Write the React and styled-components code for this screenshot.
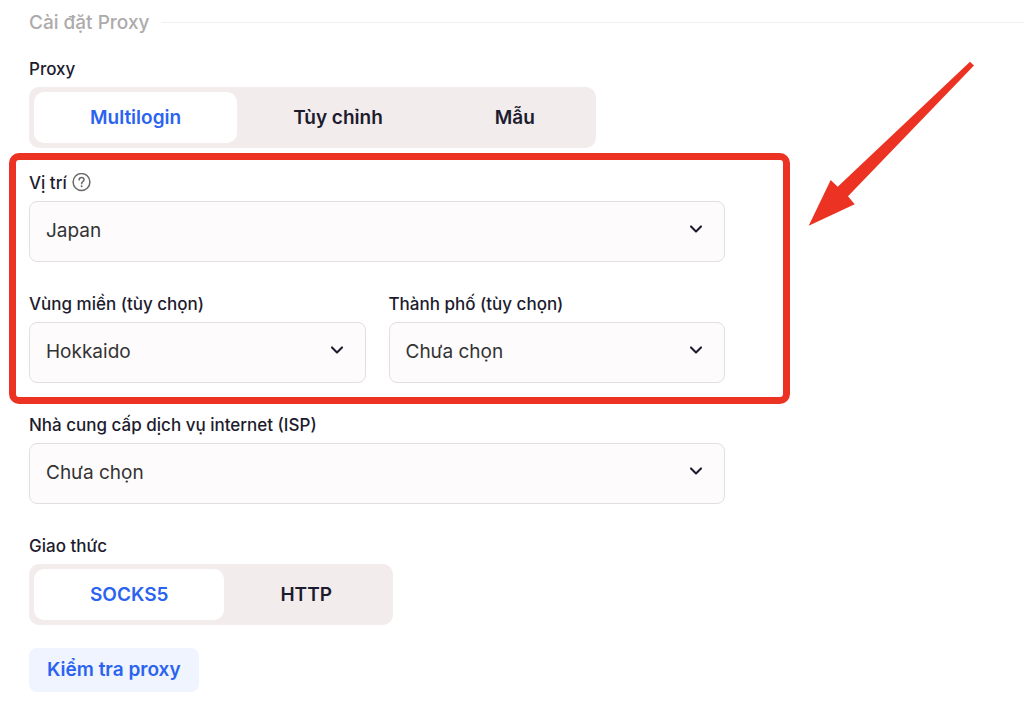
import React, { useState } from "react";
import styled, { createGlobalStyle } from "styled-components";

const App = () => {
  const [source, setSource] = useState("Multilogin");
  const [protocol, setProtocol] = useState("SOCKS5");

  return (
    <Page>
      <GlobalStyle />
      <Heading>Cài đặt Proxy</Heading>
      <Form onSubmit={(e) => e.preventDefault()}>
        <Tabs label="Proxy" name="source" items={["Multilogin", "Tùy chỉnh", "Mẫu"]} value={source} onChange={setSource} />

        <Highlight>
          <SelectField id="country" label="Vị trí" options={["Japan"]} help />
          <Columns>
            <SelectField id="region" label="Vùng miền (tùy chọn)" options={["Hokkaido"]} />
            <SelectField id="city" label="Thành phố (tùy chọn)" options={["Chưa chọn"]} />
          </Columns>
          <Frame />
          <Arrow viewBox="0 0 170 168" aria-hidden="true">
            <path d="M.7 165.7 22.7 120l7 6.7L162 1.7l4 3.8L40 136.3l6.7 8z" />
          </Arrow>
        </Highlight>

        <Protocol>
          <SelectField id="isp" label="Nhà cung cấp dịch vụ internet (ISP)" options={["Chưa chọn"]} />
          <Tabs label="Giao thức" name="protocol" items={["SOCKS5", "HTTP"]} value={protocol} onChange={setProtocol} />
        </Protocol>

        <CheckButton type="button">Kiểm tra proxy</CheckButton>
      </Form>
    </Page>
  );
};

export default App;

const Tabs = ({ label, name, items, value, onChange }) => (
  <Field>
    <Label as="span" id={name}>{label}</Label>
    <TabList role="group" aria-labelledby={name}>
      {items.map((item) => (
        <Tab key={item} type="button" $active={item === value} aria-pressed={item === value} onClick={() => onChange(item)}>
          {item}
        </Tab>
      ))}
    </TabList>
  </Field>
);

const SelectField = ({ id, label, options, help }) => (
  <Field>
    <LabelRow>
      <Label htmlFor={id}>{label}</Label>
      {help && (
        <HelpIcon viewBox="0 0 20 20" aria-hidden="true">
          <circle cx="9.5" cy="9" r="8.4" />
          <path d="M7.1 7c0-1.5 1-2.5 2.5-2.5S12 5.400 12 6.700c0 1.900-2.400 1.900-2.400 4" />
          <circle className="dot" cx="9.6" cy="13.2" r="1" />
        </HelpIcon>
      )}
    </LabelRow>
    <SelectBox>
      <Select id={id}>
        {options.map((option) => (
          <option key={option}>{option}</option>
        ))}
      </Select>
      <Chevron viewBox="0 0 14 10" aria-hidden="true">
        <path d="M2 2.400 7 7.400l5-5" />
      </Chevron>
    </SelectBox>
  </Field>
);

const GlobalStyle = createGlobalStyle`
  * {
    box-sizing: border-box;
  }
  body {
    margin: 0;
    background: #ffffff;
    color: #1d1b2e;
    font-family: Inter, "Noto Sans", sans-serif;
  }
  button,
  select {
    font-family: inherit;
    color: inherit;
  }
`;

const Page = styled.main`
  padding: 8px 0 12px 29px;
  overflow-x: hidden;
`;

const Heading = styled.h2`
  display: flex;
  align-items: center;
  gap: 12px;
  margin: 0 0 20px;
  font-weight: 500;
  font-size: 19px;
  line-height: 29px;
  color: #adabab;

  &::after {
    content: "";
    flex: 1;
    height: 1px;
    background: #f1f0f0;
  }
`;

const Form = styled.form`
  display: flex;
  flex-direction: column;
  align-items: stretch;
  gap: 23px;
  max-width: 696px;
`;

const Field = styled.div`
  display: flex;
  flex-direction: column;
  gap: 6px;
`;

const LabelRow = styled.div`
  display: flex;
  align-items: center;
  gap: 5px;
`;

const Label = styled.label`
  font-weight: 500;
  font-size: 17px;
  line-height: 24px;
`;

const HelpIcon = styled.svg`
  width: 20px;
  height: 20px;
  fill: none;
  stroke: #6b6b6b;
  stroke-width: 1.5;
  stroke-linecap: round;

  & .dot {
    fill: #6b6b6b;
    stroke: none;
  }
`;

const TabList = styled.div`
  display: flex;
  align-self: flex-start;
  padding: 5px;
  border-radius: 10px;
  background: #f2ecec;
`;

const Tab = styled.button`
  height: 51px;
  padding: 0 56px;
  border: none;
  border-radius: 10px;
  background: ${({ $active }) => ($active ? "#ffffff" : "transparent")};
  color: ${({ $active }) => ($active ? "#2b63f1" : "#1d1b2e")};
  font-weight: 600;
  font-size: 19px;
  line-height: 28px;
  cursor: pointer;
`;

const Highlight = styled.section`
  position: relative;
  display: flex;
  flex-direction: column;
  gap: 30px;
`;

const Frame = styled.div`
  position: absolute;
  inset: -18px -65px -21px -20px;
  border: 7px solid #ec3323;
  border-radius: 10px;
  pointer-events: none;
`;

const Arrow = styled.svg`
  position: absolute;
  top: -111px;
  left: calc(100% + 83px);
  width: 170px;
  height: 168px;
  fill: #ec3323;
  pointer-events: none;
`;

const Columns = styled.div`
  display: grid;
  grid-template-columns: 1fr 1fr;
  gap: 23px;
`;

const SelectBox = styled.div`
  position: relative;
`;

const Select = styled.select`
  display: block;
  appearance: none;
  width: 100%;
  height: 61px;
  padding: 0 48px 2px 16px;
  border: 1px solid #e2dfe0;
  border-radius: 8px;
  background: #fdfbfc;
  color: #333333;
  font-size: 19px;
`;

const Chevron = styled.svg`
  position: absolute;
  top: 23px;
  right: 22px;
  width: 14px;
  height: 10px;
  fill: none;
  stroke: #1d1b2e;
  stroke-width: 2.1;
  stroke-linecap: round;
  stroke-linejoin: round;
  pointer-events: none;
`;

const Protocol = styled.section`
  display: flex;
  flex-direction: column;
  gap: 30px;
  margin-top: 7px;
`;

const CheckButton = styled.button`
  align-self: flex-start;
  height: 44px;
  padding: 0 18px;
  border: none;
  border-radius: 8px;
  background: #eff4fe;
  font-weight: 600;
  font-size: 19px;
  line-height: 28px;
  cursor: pointer;

  && {
    color: #2b63f1;
  }
`;
